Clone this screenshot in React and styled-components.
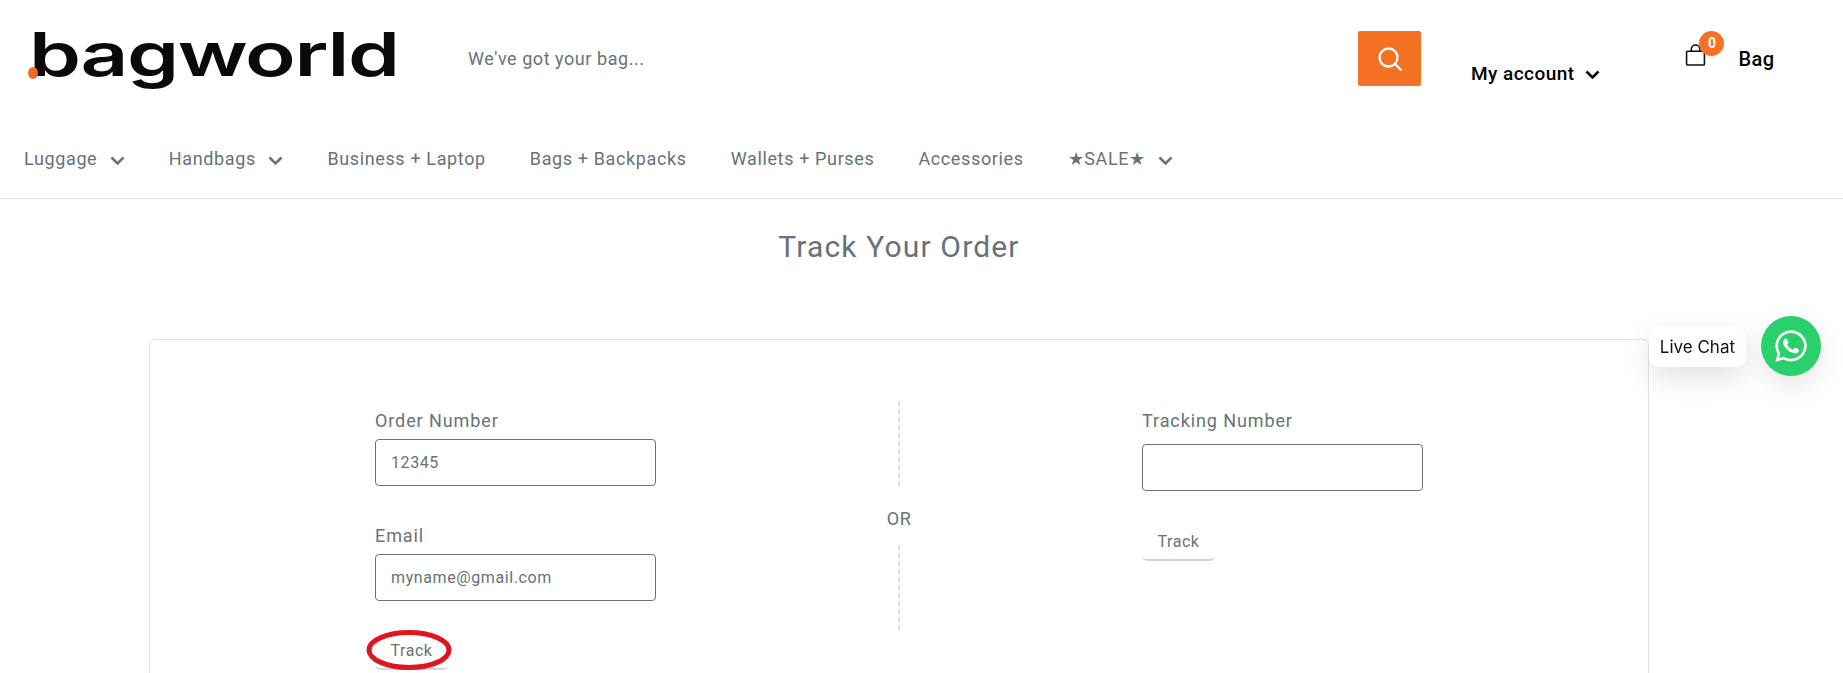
import React from "react";
import styled, { createGlobalStyle } from "styled-components";
import { FaWhatsapp } from "react-icons/fa";

const GlobalStyle = createGlobalStyle`
  html, body {
    margin: 0;
    height: 673px;
    overflow: hidden;
    background: #fff;
    font-family: Roboto, "Liberation Sans", sans-serif;
  }
  * { box-sizing: border-box; }
`;

function Chevron({ color = "#677279" }) {
  return (
    <ChevronIcon width="15" height="10" viewBox="0 0 15 10" fill="none">
      <path d="M1.5 1.5 7.5 7.5l6-6" stroke={color} strokeWidth="2.6" />
    </ChevronIcon>
  );
}

const navItems = [
  { label: "Luggage", menu: true },
  { label: "Handbags", menu: true },
  { label: "Business + Laptop" },
  { label: "Bags + Backpacks" },
  { label: "Wallets + Purses" },
  { label: "Accessories" },
  { label: "★SALE★", menu: true },
];

export default function App() {
  return (
    <>
      <GlobalStyle />
      <Header>
        <TopRow>
          <Logo>
            <LogoText>bagworld</LogoText>
            <LogoDot />
          </Logo>
          <SearchBar>
            <SearchText>We've got your bag...</SearchText>
            <SearchButton>
              <svg width="28" height="28" viewBox="0 0 28 28" fill="none" stroke="#fff" strokeWidth="2.3">
                <circle cx="12.5" cy="12.5" r="9" />
                <path d="m19 19 6.5 6.5" />
              </svg>
            </SearchButton>
          </SearchBar>
          <Account>
            My account
            <Chevron color="#000" />
          </Account>
          <Cart>
            <CartIcon>
              <svg width="21" height="24" viewBox="0 0 20 22" fill="none" stroke="#111" strokeWidth="1.5">
                <path d="M2.5 7.5h15a1 1 0 0 1 1 1v11a1 1 0 0 1-1 1h-15a1 1 0 0 1-1-1v-11a1 1 0 0 1 1-1Z" />
                <path d="M6 7.5V5.5a4 4 0 0 1 8 0v2" />
              </svg>
              <CartBadge>0</CartBadge>
            </CartIcon>
            <CartText>Bag</CartText>
          </Cart>
        </TopRow>
        <Nav>
          {navItems.map((item) => (
            <NavItem key={item.label}>
              {item.label}
              {item.menu && <Chevron />}
            </NavItem>
          ))}
        </Nav>
      </Header>

      <Title>Track Your Order</Title>

      <Card>
        <Column>
          <Field>
            <Label>Order Number</Label>
            <Input>12345</Input>
          </Field>
          <Field $top={39}>
            <Label>Email</Label>
            <Input>myname@gmail.com</Input>
          </Field>
          <TrackWrap $top={32}>
            <TrackButton>Track</TrackButton>
            <Circled viewBox="0 0 86 40" fill="none">
              <ellipse cx="43" cy="20" rx="40" ry="17.5" stroke="#e0161f" strokeWidth="5" />
            </Circled>
          </TrackWrap>
        </Column>
        <Divider>
          <DashLine />
          <OrText>OR</OrText>
          <DashLine />
        </Divider>
        <Column>
          <Field>
            <Label $gap={12}>Tracking Number</Label>
            <Input />
          </Field>
          <TrackWrap $top={33}>
            <TrackButton>Track</TrackButton>
          </TrackWrap>
        </Column>
      </Card>

      <Chat>
        <ChatLabel>Live Chat</ChatLabel>
        <ChatButton>
          <FaWhatsapp size={36} color="#fff" />
        </ChatButton>
      </Chat>
    </>
  );
}

const ChevronIcon = styled.svg`
  flex: none;
  margin-top: 3px;
`;

const Header = styled.header`
  height: 199px;
  border-bottom: 1px solid #e1e3e4;
  background: #fff;
`;

const TopRow = styled.div`
  display: flex;
  height: 120px;
  padding: 28px 0 0 24px;
`;

const Logo = styled.div`
  position: relative;
  width: 371px;
  height: 58px;
  padding-left: 5px;
`;

const LogoText = styled.div`
  font-family: Inter, sans-serif;
  font-weight: 600;
  font-size: 60px;
  line-height: 52px;
  letter-spacing: -1px;
  color: #0a0a0a;
  transform: scaleX(1.39);
  transform-origin: left top;
  white-space: nowrap;
`;

const LogoDot = styled.span`
  position: absolute;
  left: 4px;
  top: 39px;
  width: 10px;
  height: 12px;
  border-radius: 50%;
  background: #ee6c27;
`;

const SearchBar = styled.div`
  display: flex;
  justify-content: space-between;
  width: 953px;
  height: 55px;
  margin: 3px 0 0 73px;
  align-items: center;
`;

const SearchText = styled.div`
  font-size: 18px;
  letter-spacing: 0.55px;
  color: #677279;
`;

const SearchButton = styled.div`
  display: flex;
  align-items: center;
  justify-content: center;
  width: 63px;
  height: 55px;
  border-radius: 2px;
  background: #f57123;
`;

const Account = styled.div`
  display: flex;
  align-items: center;
  gap: 11px;
  height: 24px;
  margin: 33px 0 0 50px;
  font-size: 19px;
  font-weight: 500;
  letter-spacing: 0.45px;
  color: #000;
  white-space: nowrap;
`;

const Cart = styled.div`
  display: flex;
  align-items: flex-start;
  gap: 33px;
  margin: 15px 0 0 85px;
  font-size: 20px;
  font-weight: 500;
  letter-spacing: 0.4px;
  line-height: 24px;
  color: #000;
`;

const CartText = styled.span`
  margin-top: 4px;
`;

const CartIcon = styled.div`
  position: relative;
  width: 20px;
  height: 24px;
`;

const CartBadge = styled.span`
  position: absolute;
  top: -12px;
  left: 14px;
  width: 25px;
  height: 25px;
  border-radius: 50%;
  background: #f57123;
  color: #fff;
  font-size: 14px;
  font-weight: 700;
  line-height: 25px;
  text-align: center;
  letter-spacing: 0;
`;

const Nav = styled.nav`
  display: flex;
  gap: 44px;
  padding: 27px 0 0 24px;
`;

const NavItem = styled.div`
  display: flex;
  align-items: center;
  gap: 12.5px;
  font-size: 18px;
  line-height: 24px;
  letter-spacing: 0.63px;
  color: #677279;
  white-space: nowrap;
`;

const Title = styled.h1`
  margin: 31px 0 0;
  height: 36px;
  font-size: 30px;
  font-weight: 400;
  line-height: 34px;
  letter-spacing: 1.15px;
  color: #677279;
  text-align: center;
  padding-right: 45px;
`;

const Card = styled.section`
  display: grid;
  grid-template-columns: 281px 281px 281px;
  justify-content: space-between;
  width: 1500px;
  height: 500px;
  margin: 73px 0 0 149px;
  padding: 70px 225px 0 225px;
  border: 1px solid #e1e3e4;
  border-radius: 6px;
`;

const Column = styled.div`
  display: flex;
  flex-direction: column;
`;

const Field = styled.div`
  display: flex;
  flex-direction: column;
  margin-top: ${(props) => props.$top || 0}px;
`;

const Label = styled.div`
  margin-bottom: ${(props) => props.$gap || 7}px;
  font-size: 18px;
  line-height: 22px;
  letter-spacing: 0.9px;
  color: #677279;
`;

const Input = styled.div`
  height: 47px;
  padding: 0 15px;
  border: 1px solid #677279;
  border-radius: 4px;
  font-size: 16px;
  line-height: 45px;
  letter-spacing: 0.6px;
  color: #677279;
`;

const TrackWrap = styled.div`
  position: relative;
  width: 73px;
  margin-top: ${(props) => props.$top}px;
`;

const TrackButton = styled.div`
  height: 37px;
  padding-top: 6px;
  border-bottom: 2px solid #d4d6d7;
  border-radius: 5px;
  font-size: 16px;
  line-height: 24px;
  letter-spacing: 0.5px;
  text-align: center;
  color: #677279;
`;

const Circled = styled.svg`
  position: absolute;
  left: -9px;
  top: -3px;
  width: 86px;
  height: 40px;
`;

const Divider = styled.div`
  display: flex;
  flex-direction: column;
  align-items: center;
  height: 230px;
  margin-top: -9px;
`;

const DashLine = styled.div`
  flex: none;
  width: 2px;
  height: 87px;
  background: repeating-linear-gradient(to bottom, #d9dbdc 0 5px, transparent 5px 8px);
`;

const OrText = styled.div`
  height: 57px;
  padding-top: 3px;
  font-size: 18px;
  line-height: 56px;
  letter-spacing: 0.5px;
  color: #677279;
`;

const Chat = styled.div`
  position: fixed;
  top: 316px;
  right: 22px;
  display: flex;
  align-items: center;
  gap: 15px;
`;

const ChatLabel = styled.div`
  margin-top: 2px;
  padding: 0 11px;
  height: 40px;
  border-radius: 10px;
  background: #fff;
  box-shadow: 0 10px 30px rgba(0, 0, 0, 0.12);
  font-family: Inter, sans-serif;
  font-size: 17px;
  line-height: 40px;
  color: #111;
`;

const ChatButton = styled.div`
  display: flex;
  align-items: center;
  justify-content: center;
  width: 60px;
  height: 60px;
  border-radius: 50%;
  background: #2ad06a;
  box-shadow: 0 10px 30px rgba(0, 0, 0, 0.1);
`;
